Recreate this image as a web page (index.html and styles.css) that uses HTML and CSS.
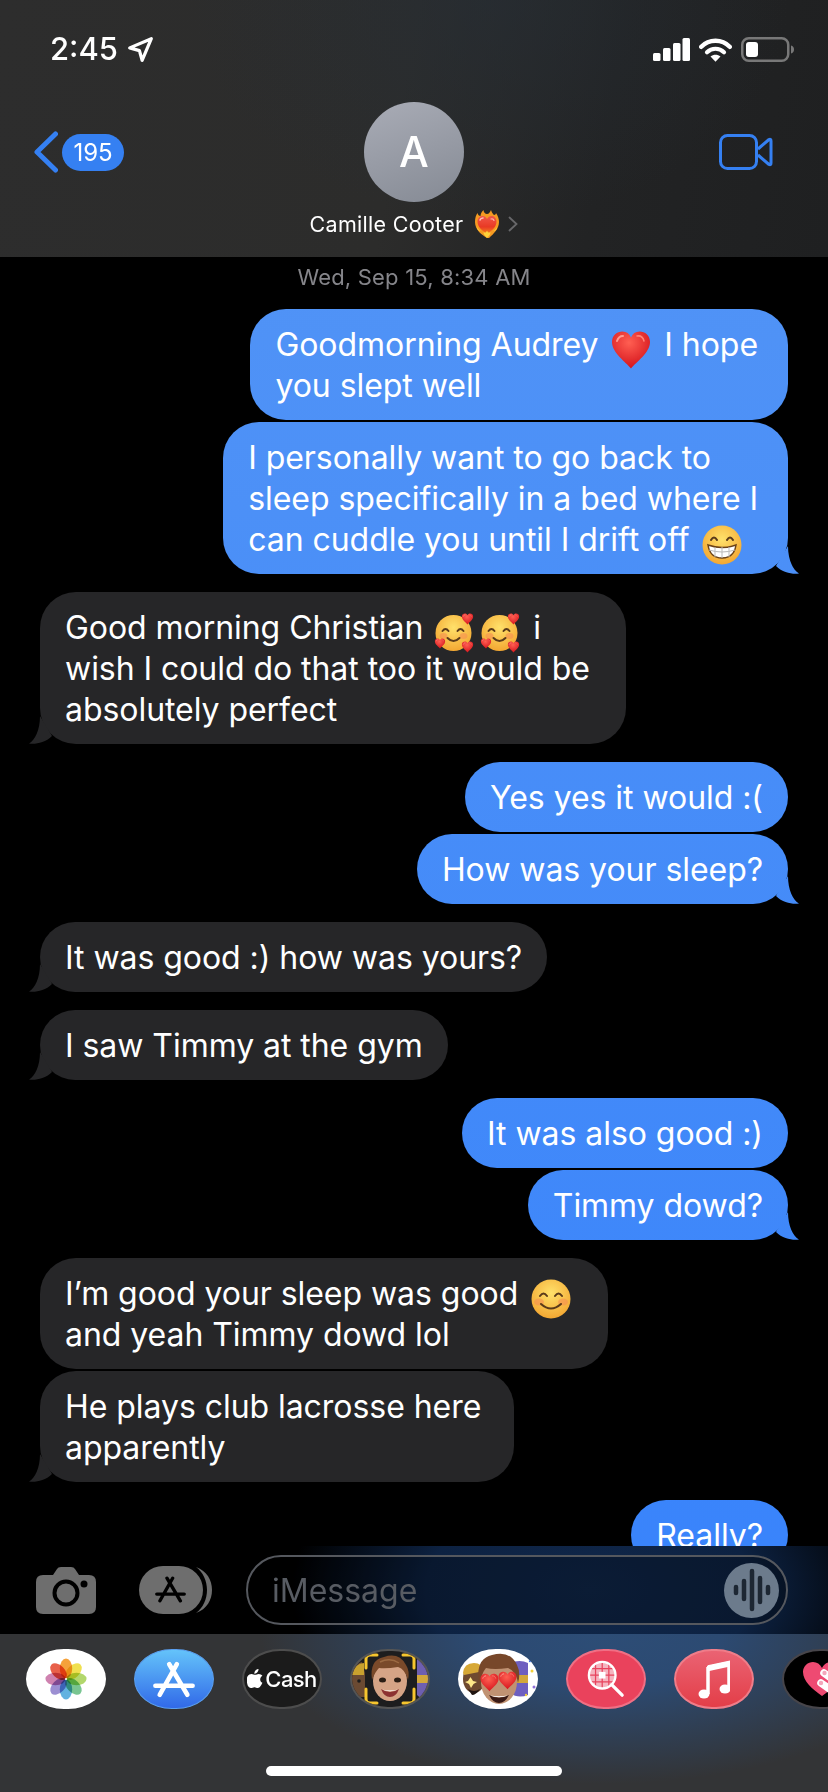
FILE: index.html
```html
<!DOCTYPE html>
<html lang="en">
<head>
<meta charset="utf-8">
<title>Messages</title>
<link rel="stylesheet" href="styles.css">
</head>
<body>
<svg class="defs" aria-hidden="true">
  <defs>
    <radialGradient id="skin" cx="50%" cy="35%" r="70%"><stop offset="0" stop-color="#ffe16b"/><stop offset="1" stop-color="#f2a32e"/></radialGradient>
    <radialGradient id="heartg" cx="45%" cy="30%" r="70%"><stop offset="0" stop-color="#ff5f52"/><stop offset="1" stop-color="#d5141c"/></radialGradient>
    <linearGradient id="fireg" x1="0" y1="0" x2="0" y2="1"><stop offset="0" stop-color="#f0574a"/><stop offset=".6" stop-color="#e83a24"/><stop offset="1" stop-color="#f5861e"/></linearGradient>
    <symbol id="heart" viewBox="0 0 40 40">
      <path d="M20 38.500C15 32 1 23 1 12C1 5.500 6 1.500 11.500 1.500c4 0 7 2 8.500 6c1.500-4 4.500-6 8.500-6C34 1.500 39 5.500 39 12C39 23 25 32 20 38.500Z" fill="url(#heartg)"/>
      <path d="M6 11c1-3 3-5 6-5" stroke="#ff9d92" stroke-width="2" fill="none" stroke-linecap="round"/>
      <path d="M26 6c3-.5 6 1 7 5" stroke="#ff8478" stroke-width="1.500" fill="none" stroke-linecap="round"/>
    </symbol>
    <symbol id="grin" viewBox="0 0 40 40">
      <circle cx="20" cy="20" r="19.500" fill="url(#skin)"/>
      <path d="M9 15q3-5 6 0M25 15q3-5 6 0" stroke="#5a3a1a" stroke-width="2" fill="none" stroke-linecap="round"/>
      <path d="M6 20q14 5 28 0q-2 13-14 13T6 20Z" fill="#fff" stroke="#6b4218" stroke-width="1.500"/>
      <path d="M7 25q13 4 26 0M20 22v11M13 22v10M27 22v10" stroke="#b9b9b9" stroke-width="1" fill="none"/>
    </symbol>
    <symbol id="smile" viewBox="0 0 40 40">
      <circle cx="20" cy="20" r="19.500" fill="url(#skin)"/>
      <ellipse cx="8" cy="23" rx="5" ry="3.500" fill="#f58a52" opacity=".55"/>
      <ellipse cx="32" cy="23" rx="5" ry="3.500" fill="#f58a52" opacity=".55"/>
      <path d="M9 17q3.500-5 7 0M24 17q3.500-5 7 0" stroke="#5a3a1a" stroke-width="2" fill="none" stroke-linecap="round"/>
      <path d="M10 25q10 9 20 0" stroke="#5a3a1a" stroke-width="2" fill="none" stroke-linecap="round"/>
    </symbol>
    <symbol id="hearts" viewBox="0 0 40 40">
      <circle cx="19" cy="20" r="18" fill="url(#skin)"/>
      <ellipse cx="9" cy="23" rx="4" ry="3" fill="#f58a52" opacity=".55"/>
      <ellipse cx="29" cy="23" rx="4" ry="3" fill="#f58a52" opacity=".55"/>
      <path d="M8 18q3-4 6 0M23 18q3-4 6 0" stroke="#5a3a1a" stroke-width="2" fill="none" stroke-linecap="round"/>
      <path d="M13 25q6 6 12 0" stroke="#5a3a1a" stroke-width="2" fill="none" stroke-linecap="round"/>
      <use href="#heart" x="27" y="0" width="12" height="12"/>
      <use href="#heart" x="0" y="25" width="11" height="11"/>
      <use href="#heart" x="27" y="28" width="12" height="12"/>
    </symbol>
    <symbol id="astore" viewBox="0 0 44 38">
      <path d="M17 3L36 35M25 3L7 35M2.500 25.500H41.500" fill="none" stroke="currentColor" stroke-linecap="round" stroke-width="4.800"/>
    </symbol>
  </defs>
</svg>
<main class="phone">
  <header class="head">
    <div class="status">
      <div class="clock">
        <span class="time">2:45</span>
        <svg class="loc" viewBox="0 0 25 25"><path d="M2.500 11L22.500 2.500L14 22.500L11.500 13.500Z" fill="none" stroke="#fff" stroke-width="3" stroke-linejoin="round"/></svg>
      </div>
      <div class="sysicons">
        <svg class="signal" viewBox="0 0 37 23"><rect x="0" y="15" width="7.500" height="8" rx="1.500"/><rect x="10" y="10" width="7.500" height="13" rx="1.500"/><rect x="20" y="5" width="7.500" height="18" rx="1.500"/><rect x="29.500" y="0" width="7.500" height="23" rx="1.500"/></svg>
        <svg class="wifi" viewBox="0 0 33 25"><path d="M2.300 9.800C10 1.800 23 1.800 30.700 9.800" fill="none" stroke="#fff" stroke-width="4.400" stroke-linecap="round"/><path d="M8 15.200C12.800 10.600 20.200 10.600 25 15.200" fill="none" stroke="#fff" stroke-width="4.200" stroke-linecap="round"/><path d="M11.500 19.500C14.500 17 18.500 17 21.500 19.500L16.500 24.800Z" fill="#fff"/></svg>
        <svg class="batt" viewBox="0 0 53 25"><rect x="1.250" y="1.250" width="46" height="22.500" rx="6.500" fill="none" stroke="#787878" stroke-width="2.500"/><rect x="5" y="5" width="12" height="15" rx="3" fill="#fff"/><path d="M50 8.500c2 .5 3 2 3 4s-1 3.500-3 4Z" fill="#787878"/></svg>
      </div>
    </div>
    <div class="nav">
      <div class="back">
        <svg class="chev" viewBox="0 0 24 42"><path d="M21.500 3L3 21L21.500 39" fill="none" stroke="#3580f2" stroke-width="5" stroke-linecap="round" stroke-linejoin="round"/></svg>
        <span class="badge">195</span>
      </div>
      <div class="contact">
        <div class="avatar">A</div>
        <div class="name">
          <span>Camille Cooter</span>
          <svg class="fire" viewBox="0 0 26 28">
            <path d="M13 28C8 25 1 20 1 12C1 8 2 5 3.500 3c.5 2 1.500 3 3 3c0-2 1-4 3-6c0 2 1.500 4 3.500 4c2 0 3-2 4-4c1 3 2 4 3 5c1 0 2-1 2-2c2 3 3 6 3 9c0 8-7 13-12 18Z" fill="#f59a22"/>
            <path d="M13 24C8 20.500 3.500 17 3.500 11.500C3.500 8 6 6 8.500 6c2 0 3.500 1 4.500 3c1-2 2.500-3 4.500-3c2.500 0 5 2 5 5.500C22.500 17 18 20.500 13 24Z" fill="url(#fireg)"/>
            <path d="M6 10c.5-1.500 1.500-2 3-2" stroke="#ffc4bc" stroke-width="1.500" fill="none" stroke-linecap="round"/>
            <path d="M17 9c1.500-.5 2.500 0 3 1.500" stroke="#ffb0a6" stroke-width="1.200" fill="none" stroke-linecap="round"/>
            <path d="M13 28c-2-2-3.500-3.500-3.500-6c1 1 2.500 1 3.500-1.500c1 2.500 2.500 2.500 3.500 1.500c0 2.500-1.500 4-3.500 6Z" fill="#ffd23a"/>
            <path d="M3 17c1 2 2 3 4 4c-2 0-4-1-4-4ZM23 17c-1 2-2 3-4 4c2 0 4-1 4-4Z" fill="#ffd23a"/>
          </svg>
          <svg class="more" viewBox="0 0 10 16"><path d="M1.500 1.500L8.500 8L1.500 14.500" fill="none" stroke="#68686a" stroke-width="1.800" stroke-linecap="round"/></svg>
        </div>
      </div>
      <div class="call">
        <svg class="video" viewBox="0 0 54 36"><rect x="1.500" y="1.500" width="36" height="33" rx="7" fill="none" stroke="#3580f2" stroke-width="3"/><path d="M39 15L50 5.500Q52 4.500 52 7V29Q52 31.500 50 30.500L39 21" fill="none" stroke="#3580f2" stroke-width="3" stroke-linejoin="round"/></svg>
      </div>
    </div>
  </header>

  <section class="thread">
    <p class="stamp">Wed, Sep 15, 8:34 AM</p>
    <p class="msg sent wrap">Goodmorning Audrey <svg class="emo"><use href="#heart"/></svg> I hope<br>you slept well</p>
    <p class="msg sent wrap near tail">I personally want to go back to<br>sleep specifically in a bed where I<br>can cuddle you until I drift off <svg class="emo"><use href="#grin"/></svg></p>
    <p class="msg recv wrap-wide far tail">Good morning Christian <svg class="emo emo-a"><use href="#hearts"/></svg><svg class="emo emo-b"><use href="#hearts"/></svg> i<br>wish I could do that too it would be<br>absolutely perfect</p>
    <p class="msg sent far">Yes yes it would :(</p>
    <p class="msg sent near tail">How was your sleep?</p>
    <p class="msg recv far tail">It was good :) how was yours?</p>
    <p class="msg recv far tail">I saw Timmy at the gym</p>
    <p class="msg sent far">It was also good :)</p>
    <p class="msg sent near tail">Timmy dowd?</p>
    <p class="msg recv wrap-mid far">I’m good your sleep was good <svg class="emo"><use href="#smile"/></svg><br>and yeah Timmy dowd lol</p>
    <p class="msg recv wrap-mid near tail">He plays club lacrosse here<br>apparently</p>
    <p class="msg sent far">Really?</p>
  </section>

  <section class="composer">
    <svg class="camera" viewBox="0 0 60 47"><path d="M7 8H17L21 2Q22 0 25 0H35Q38 0 39 2L43 8H53Q60 8 60 15V40Q60 47 53 47H7Q0 47 0 40V15Q0 8 7 8Z" fill="#6e6e6e"/><circle cx="30" cy="26" r="11.500" fill="none" stroke="#000" stroke-width="4"/><circle cx="48" cy="17" r="3.500" fill="#000"/></svg>
    <svg class="storepill" viewBox="0 0 73 48">
      <path d="M57 1C68 5 73 14 73 24S68 43 57 47C64 42 68 33 68 24S64 6 57 1Z" fill="#6e6e6e"/>
      <rect x="0" y="0" width="64" height="48" rx="24" fill="#6e6e6e"/>
      <use href="#astore" x="16" y="10" width="31" height="27" color="#000"/>
    </svg>
    <div class="field">
      <span class="hint">iMessage</span>
      <div class="mic">
        <svg class="wave" viewBox="0 0 38 44"><path d="M3 19v6M11 13v18M19 3v38M27 10v24M35 19v6" stroke="#1d2733" stroke-width="4.500" stroke-linecap="round"/></svg>
      </div>
    </div>
  </section>

  <footer class="drawer">
    <div class="apps">
      <div class="app app-photos">
        <svg class="ic" viewBox="0 0 44 44">
          <g class="petals">
            <ellipse class="petal" cx="22" cy="11" rx="6.500" ry="10.500" fill="#f5a13a"/>
            <ellipse class="petal" cx="22" cy="11" rx="6.500" ry="10.500" fill="#f0e050" transform="rotate(45 22 22)"/>
            <ellipse class="petal" cx="22" cy="11" rx="6.500" ry="10.500" fill="#b2d76c" transform="rotate(90 22 22)"/>
            <ellipse class="petal" cx="22" cy="11" rx="6.500" ry="10.500" fill="#79c591" transform="rotate(135 22 22)"/>
            <ellipse class="petal" cx="22" cy="11" rx="6.500" ry="10.500" fill="#62b2e0" transform="rotate(180 22 22)"/>
            <ellipse class="petal" cx="22" cy="11" rx="6.500" ry="10.500" fill="#9c8fd2" transform="rotate(225 22 22)"/>
            <ellipse class="petal" cx="22" cy="11" rx="6.500" ry="10.500" fill="#cf82b0" transform="rotate(270 22 22)"/>
            <ellipse class="petal" cx="22" cy="11" rx="6.500" ry="10.500" fill="#e8604a" transform="rotate(315 22 22)"/>
          </g>
          <circle cx="22" cy="22" r="1" fill="#fff"/>
        </svg>
      </div>
      <div class="app app-store">
        <svg class="ic-a" viewBox="0 0 44 38"><use href="#astore" width="44" height="38" color="#fff"/></svg>
      </div>
      <div class="app app-cash">
        <svg class="apple" viewBox="0 0 16 19"><path d="M11.500 0c.1 1.300-.4 2.500-1.100 3.300c-.8.900-1.900 1.500-3 1.400c-.2-1.200.4-2.500 1.100-3.300C9.300.6 10.500 0 11.500 0ZM15.400 13.700c-.5 1.100-.7 1.600-1.300 2.500c-.9 1.300-2 2.800-3.400 2.800c-1.300 0-1.600-.8-3.300-.8s-2.100.8-3.400.8c-1.400 0-2.500-1.400-3.300-2.600C-.4 13.200-.7 9.300.6 7.200c1-1.500 2.500-2.300 4-2.300s2.400.8 3.600.8s1.900-.8 3.600-.8c1.300 0 2.700.7 3.600 1.900c-3.200 1.800-2.700 6.300 0 6.900Z" fill="#fff"/></svg>
        <span class="cash">Cash</span>
      </div>
      <div class="app app-moji">
        <svg class="fill" viewBox="0 0 76 56">
          <path d="M0 22Q4 12 10 11L13 22V46L4 46Q0 40 0 30Z" fill="#6b4a32"/>
          <path d="M0 24Q3 12 12 12V24Z" fill="#c9a12e"/>
          <circle cx="7" cy="30" r="1.800" fill="#1c1c1c"/>
          <path d="M65 8Q76 12 76 28V44Q70 50 65 44Z" fill="#6e5fb0"/>
          <path d="M65 24H76V32H65Z" fill="#d3a83a"/>
          <path d="M14 17V8Q14 4 18 4H25M51 4H58Q62 4 62 8V17M14 38V48Q14 52 18 52H25M51 52H58Q62 52 62 48V38" fill="none" stroke="#f6c52e" stroke-width="3" stroke-linecap="round"/>
          <ellipse cx="38" cy="30" rx="17" ry="20" fill="#d6a486"/>
          <path d="M20 29Q17 9 32 6Q47 1 54 14Q58 20 56 29Q53 18 46 16Q34 18 27 17Q23 21 20 29Z" fill="#7a4a2a"/>
          <path d="M28 11Q38 6 47 12" stroke="#9c6a42" stroke-width="1.500" fill="none"/>
          <ellipse cx="30.500" cy="29" rx="3.500" ry="2.500" fill="#2b1d14"/>
          <ellipse cx="45.500" cy="29" rx="3.500" ry="2.500" fill="#2b1d14"/>
          <path d="M29 38Q38 44 47 38Q44 46 38 46T29 38Z" fill="#8c3232"/>
          <path d="M30 38.500Q38 42 46 38.500Q38 40.500 30 38.500Z" fill="#fff"/>
        </svg>
      </div>
      <div class="app app-moji2">
        <svg class="fill" viewBox="0 0 80 60">
          <path d="M52 14Q62 10 70 14V46Q60 50 52 44Z" fill="#6e5fc0"/>
          <path d="M54 26H70V34H54Z" fill="#d3a83a"/>
          <circle cx="74" cy="22" r="1.500" fill="#f0cf3a"/><circle cx="72" cy="12" r="1.200" fill="#3a6fe0"/><circle cx="76" cy="38" r="1.500" fill="#8f6fd8"/><circle cx="68" cy="46" r="1.200" fill="#f0cf3a"/>
          <ellipse cx="16" cy="30" rx="11" ry="14" fill="#6f4a30"/>
          <path d="M5 24Q6 14 16 14Q24 14 26 22L6 26Z" fill="#d7a836"/>
          <path d="M10 32L12.500 28L15 32L19 33L15.500 35L13 39L11 35L7 33Z" fill="#ffe98a"/>
          <path d="M10 40Q16 44 22 40Q18 46 14 46Z" fill="#1f1410"/>
          <ellipse cx="41" cy="33" rx="18" ry="22" fill="#c09272"/>
          <path d="M21 34Q17 10 34 6Q52 1 59 16Q63 24 60 34Q58 22 50 19Q36 21 28 19Q24 24 21 34Z" fill="#77472a"/>
          <use href="#heart" x="22" y="24" width="19" height="19"/>
          <use href="#heart" x="40" y="22" width="19" height="19"/>
          <path d="M31 46Q41 51 51 46Q47 54 41 54T31 46Z" fill="#3a1b16"/>
          <path d="M32 46.500Q41 50 50 46.500Q41 48 32 46.500Z" fill="#fff"/>
        </svg>
      </div>
      <div class="app app-search">
        <svg class="ic-s" viewBox="0 0 40 40">
          <circle cx="16" cy="16" r="14" fill="#f5b4bf"/>
          <path d="M9 2V30M16 2V30M23 2V30M2 9H30M2 16H30M2 23H30" stroke="#e8435d" stroke-width="1.300"/>
          <rect x="12.500" y="12.500" width="7" height="7" fill="#fff"/>
          <circle cx="16" cy="16" r="14" fill="none" stroke="#fff" stroke-width="2.500"/>
          <path d="M26.500 26.500L37 37" stroke="#fff" stroke-width="3.500" stroke-linecap="round"/>
        </svg>
      </div>
      <div class="app app-music">
        <svg class="ic-m" viewBox="0 0 32 40"><path d="M10 8L31 3.500V29M10 8V35" fill="none" stroke="#fff" stroke-width="3.500"/><path d="M9 12.500L32 7.500V2L9 7Z" fill="#fff"/><ellipse cx="6" cy="35" rx="5.500" ry="4.500" fill="#fff"/><ellipse cx="27" cy="30" rx="5.500" ry="4.500" fill="#fff"/></svg>
      </div>
      <div class="app app-health">
        <svg class="ic-h" viewBox="0 0 40 36"><path d="M20 35C10 28 1 20 1 11C1 5 6 1 11 1c4 0 7 2 9 6c2-4 5-6 9-6c5 0 10 4 10 10C39 20 30 28 20 35Z" fill="#ee4a72"/><path d="M19 22L42 38M22 12L42 26" stroke="#fff" stroke-width="7.500" stroke-linecap="round"/><circle cx="19" cy="22" r="2.200" fill="#f3a7bb"/><circle cx="22.500" cy="12" r="2.200" fill="#f3a7bb"/></svg>
      </div>
    </div>
    <div class="homebar"></div>
  </footer>
</main>
</body>
</html>
```

FILE: styles.css
```css
* { box-sizing: border-box; }
html, body { margin: 0; padding: 0; background: #000; }
body { width: 828px; height: 1792px; overflow: hidden; font-family: Inter, "Liberation Sans", sans-serif; color: #fff; }
.defs { display: block; width: 0; height: 0; }
.phone { width: 828px; height: 1792px; display: flex; flex-direction: column; overflow: hidden; }

/* header */
.head { height: 257px; flex: none; display: flex; flex-direction: column;
  background: radial-gradient(300px 220px at 490px 0, rgba(38,46,54,.6), rgba(38,46,54,0)), linear-gradient(100deg, #2d2d2d 0%, #2c2c2b 48%, #222324 72%, #1f2021 100%); }
.status { height: 102px; flex: none; padding: 0 34px 4px 50px; display: flex; justify-content: space-between; align-items: center; }
.clock { display: flex; align-items: center; gap: 9px; }
.time { font-size: 31px; font-weight: 500; line-height: 34px; }
.loc { width: 27px; height: 27px; }
.sysicons { display: flex; align-items: center; gap: 9px; }
.signal { width: 37px; height: 23px; fill: #fff; }
.wifi { width: 33px; height: 25px; }
.batt { width: 53px; height: 25px; }
.nav { display: grid; grid-template-columns: 1fr auto 1fr; align-items: start; }
.back { height: 100px; padding-left: 34px; display: flex; align-items: center; gap: 4px; }
.chev { width: 24px; height: 42px; }
.badge { width: 62px; height: 37px; border-radius: 18.5px; background: #3580f2; font-size: 24px; line-height: 37px; text-align: center; }
.contact { display: flex; flex-direction: column; align-items: center; }
.avatar { width: 100px; height: 100px; border-radius: 50%; background: linear-gradient(160deg, #a9acb6, #858a94); font-size: 42px; font-weight: 500; line-height: 100px; text-align: center; }
.name { margin-top: 8px; height: 28px; display: flex; align-items: center; font-size: 21.5px; letter-spacing: .3px; white-space: nowrap; }
.fire { width: 26px; height: 28px; margin-left: 11px; }
.more { width: 10px; height: 16px; margin-left: 8px; }
.call { height: 100px; padding-right: 55px; display: flex; align-items: center; justify-content: flex-end; }
.video { width: 54px; height: 36px; }

/* thread */
.thread { flex: 1; min-height: 0; overflow: hidden; padding: 0 40px; display: flex; flex-direction: column; background: #000; }
.stamp { margin: 8px 0 20px; height: 24px; font-size: 22px; line-height: 24px; text-align: center; color: #85858a; letter-spacing: .2px; flex: none; }
.msg { position: relative; flex: none; margin: 0; padding: 14.5px 25px; font-size: 32px; line-height: 41px; letter-spacing: -.05px; border-radius: 36px; white-space: nowrap; }
.wrap { padding-right: 30px; }
.wrap-mid { padding-right: 33px; }
.wrap-wide { padding-right: 36px; }
.sent { align-self: flex-end; background: linear-gradient(#5596f5, #3581fc) fixed; }
.recv { align-self: flex-start; background: #262628; }
.near { margin-top: 2px; }
.far { margin-top: 18px; }
.emo { width: 40px; height: 40px; margin: -6px 4px; vertical-align: -8px; }
.emo-a { width: 41px; margin: -6px 0 -6px 2px; }
.emo-b { width: 41px; margin: -6px 3px -6px 5px; }
.tail::after { content: ""; position: absolute; bottom: 0; width: 26px; height: 28px; }
.sent.tail::after { right: -11px; background: linear-gradient(#5596f5, #3581fc) fixed;
  clip-path: path("M15 0C15 14 20 24 26 27.500C20 28.500 10 27 3 20Z"); }
.recv.tail::after { left: -11px; background: #262628;
  clip-path: path("M11 0C11 14 6 24 0 27.500C6 28.500 16 27 23 20Z"); }

/* composer */
.composer { height: 88px; flex: none; padding-left: 36px; display: flex; align-items: center; background: radial-gradient(300px 170px at 590px 50%, #10274a 0%, #0d2242 55%, rgba(8,20,40,0) 100%), #000; }
.camera { width: 60px; height: 47px; flex: none; }
.storepill { width: 73px; height: 48px; margin-left: 43px; flex: none; }
.field { width: 542px; height: 70px; margin-left: 34px; flex: none; padding: 0 7px 0 24px; border: 2.5px solid #55585e; border-radius: 35px; background: rgba(0,0,0,.28); display: flex; align-items: center; justify-content: space-between; }
.hint { font-size: 32px; color: #585c63; }
.mic { width: 55px; height: 55px; border-radius: 50%; background: #6c7b8c; display: flex; align-items: center; justify-content: center; }
.wave { width: 38px; height: 44px; }

/* app drawer */
.drawer { height: 158px; flex: none; padding-top: 15px; display: flex; flex-direction: column; background: radial-gradient(340px 150px at 600px 0, #2d4d76 0%, #2c4a72 35%, rgba(48,52,58,0) 100%), linear-gradient(#333436, #333436); }
.apps { height: 60px; flex: none; padding-left: 26px; display: flex; gap: 28px; overflow: hidden; }
.app { width: 80px; height: 60px; flex: none; border-radius: 38px / 30px; display: flex; align-items: center; justify-content: center; overflow: hidden; }
.app-photos { background: #fff; }
.app-store { background: linear-gradient(#64c3fa, #3169e8); border: 1px solid #5a9ff0; }
.app-cash { background: #1b1b1b; border: 2px solid #4d4d4d; gap: 2px; }
.app-moji { background: #1d1d1e; border: 2px solid #555; }
.app-moji2 { background: #fff; }
.app-search { background: #ea425c; border: 2px solid #f06f84; }
.app-music { background: linear-gradient(#ea6373, #e33e48); border: 2px solid #ef7d89; }
.app-health { background: #000; border: 2px solid #47454a; justify-content: flex-start; padding-left: 18px; }
.ic { width: 42px; height: 42px; }
.petals { isolation: isolate; }
.petal { mix-blend-mode: multiply; }
.ic-a { width: 42px; height: 37px; }
.ic-s { width: 38px; height: 38px; margin: 0 0 0 -1px; }
.ic-m { width: 32px; height: 40px; }
.ic-h { width: 40px; height: 36px; flex: none; }
.fill { width: 100%; height: 100%; display: block; }
.apple { width: 16px; height: 19px; margin-bottom: 2px; }
.cash { font-size: 22px; font-weight: 500; letter-spacing: -.6px; }
.homebar { width: 296px; height: 10px; margin: 57px auto 0; border-radius: 5px; background: #fff; flex: none; }
```
